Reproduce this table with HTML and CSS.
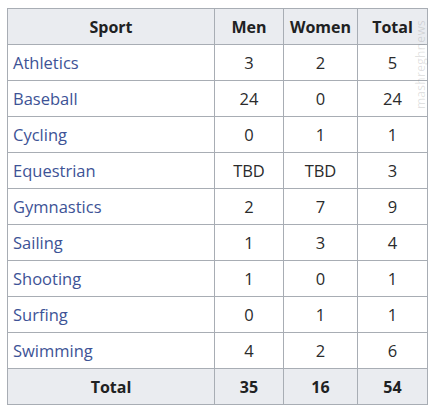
FILE: index.html
```html
<!DOCTYPE html>
<html>
<head>
<meta charset="utf-8">
<link rel="stylesheet" href="styles.css">
</head>
<body>
<div class="wrap">
<table class="medals">
  <colgroup>
    <col class="c-sport"><col class="c-men"><col class="c-women"><col class="c-total">
  </colgroup>
  <thead>
    <tr><th>Sport</th><th>Men</th><th>Women</th><th>Total</th></tr>
  </thead>
  <tbody>
    <tr><td class="sport"><a href="#">Athletics</a></td><td>3</td><td>2</td><td>5</td></tr>
    <tr><td class="sport"><a href="#">Baseball</a></td><td>24</td><td>0</td><td>24</td></tr>
    <tr><td class="sport"><a href="#">Cycling</a></td><td>0</td><td>1</td><td>1</td></tr>
    <tr><td class="sport"><a href="#">Equestrian</a></td><td>TBD</td><td>TBD</td><td>3</td></tr>
    <tr><td class="sport"><a href="#">Gymnastics</a></td><td>2</td><td>7</td><td>9</td></tr>
    <tr><td class="sport"><a href="#">Sailing</a></td><td>1</td><td>3</td><td>4</td></tr>
    <tr><td class="sport"><a href="#">Shooting</a></td><td>1</td><td>0</td><td>1</td></tr>
    <tr><td class="sport"><a href="#">Surfing</a></td><td>0</td><td>1</td><td>1</td></tr>
    <tr><td class="sport"><a href="#">Swimming</a></td><td>4</td><td>2</td><td>6</td></tr>
  </tbody>
  <tfoot>
    <tr><th>Total</th><th>35</th><th>16</th><th>54</th></tr>
  </tfoot>
</table>
<span class="watermark">mashreghnews</span>
</div>
</body>
</html>
```
FILE: styles.css
```css
html, body {
  margin: 0;
  padding: 0;
  background: #ffffff;
}
body {
  padding: 8px 0 0 7px;
  font-family: "Open Sans", "Noto Sans", sans-serif;
  font-size: 16.5px;
  color: #2a2b2c;
}
.wrap {
  position: relative;
  width: 420px;
}
.medals {
  border-collapse: collapse;
  table-layout: fixed;
  width: 420px;
}
.c-sport { width: 207px; }
.c-men { width: 69px; }
.c-women { width: 74px; }
.c-total { width: 70px; }
.medals th, .medals td {
  border: 1px solid #a8adb4;
  height: 36px;
  padding: 0 5px;
  text-align: center;
  box-sizing: border-box;
}
.medals th {
  background: #eaecf0;
  font-weight: 700;
  font-size: 16px;
  color: #202122;
}
.medals td.sport {
  text-align: left;
}
.medals a {
  color: #3d5396;
  text-decoration: none;
}
.watermark {
  position: absolute;
  left: 405px;
  top: 12px;
  writing-mode: vertical-rl;
  transform: rotate(180deg);
  font-size: 12px;
  color: rgba(120, 120, 120, 0.22);
  letter-spacing: 0.3px;
}
```
